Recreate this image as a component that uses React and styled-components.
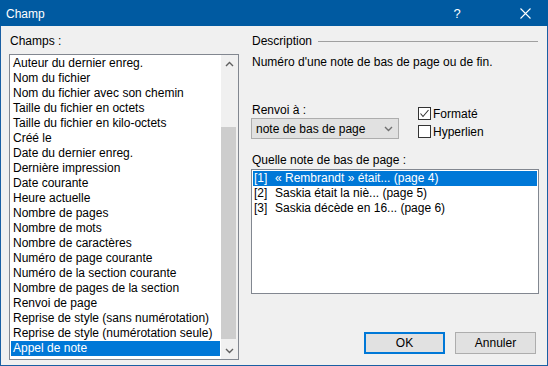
import React from "react";
import styled, { createGlobalStyle } from "styled-components";

const GlobalStyle = createGlobalStyle`
  html, body {
    margin: 0;
    padding: 0;
    background: #f0f0f0;
  }
  body {
    font-family: "Liberation Sans", Arial, sans-serif;
    font-size: 12px;
    color: #000;
  }
`;

const Window = styled.div`
  width: 548px;
  height: 366px;
  box-sizing: border-box;
  display: flex;
  flex-direction: column;
  background: #f0f0f0;
  border: 1px solid #1a5fa3;
  border-top: none;
`;

const TitleBar = styled.div`
  height: 26px;
  margin: 0 -1px;
  display: flex;
  align-items: center;
  background: #005aa1;
  color: #fff;
`;

const Title = styled.div`
  flex: 1;
  padding: 2px 0 0 6px;
  font-size: 12px;
`;

const TitleButton = styled.div`
  width: 46px;
  height: 26px;
  display: flex;
  align-items: center;
  justify-content: center;
  margin-left: ${(p) => p.$gap || 0}px;
  font-size: 13px;
`;

const Body = styled.div`
  flex: 1;
  display: grid;
  grid-template-columns: 230px 288px;
  column-gap: 12px;
  padding: 8px 0 0 8px;
`;

const Column = styled.div`
  display: flex;
  flex-direction: column;
`;

const Label = styled.div`
  line-height: 15px;
  height: 15px;
  margin-top: ${(p) => p.$top || 0}px;
  padding-left: 1px;
`;

const ListBox = styled.div`
  box-sizing: border-box;
  border: 1px solid #828790;
  background: #fff;
  height: ${(p) => p.$h}px;
  margin-top: ${(p) => p.$top || 0}px;
  display: flex;
`;

const Items = styled.div`
  flex: 1;
  padding: 1px 1px 0 1px;
  display: flex;
  flex-direction: column;
`;

const Item = styled.div`
  height: 15px;
  line-height: 15px;
  padding-left: ${(p) => p.$pad}px;
  white-space: nowrap;
  display: flex;
  background: ${(p) => (p.$sel ? "#0078d7" : "transparent")};
  color: ${(p) => (p.$sel ? "#fff" : "#000")};
`;

const Num = styled.span`
  width: 21px;
  flex: none;
`;

const ScrollBar = styled.div`
  width: 17px;
  background: #f0f0f0;
  display: flex;
  flex-direction: column;
`;

const Arrow = styled.div`
  height: 17px;
  display: flex;
  align-items: center;
  justify-content: center;
`;

const Track = styled.div`
  flex: 1;
  padding-top: 55px;
`;

const Thumb = styled.div`
  height: 212px;
  margin: 0 2px 0 0;
  background: #cdcdcd;
`;

const GroupHeader = styled.div`
  display: flex;
  align-items: center;
  height: 15px;
  line-height: 15px;
`;

const Rule = styled.div`
  flex: 1;
  height: 1px;
  background: #a0a0a0;
  margin-left: 6px;
  margin-right: 1px;
`;

const Text = styled.div`
  line-height: 15px;
  margin-top: ${(p) => p.$top || 0}px;
  padding-left: 1px;
`;

const RefRow = styled.div`
  display: flex;
  align-items: flex-end;
  margin-top: 33px;
`;

const SubColumn = styled.div`
  display: flex;
  flex-direction: column;
`;

const Select = styled.div`
  box-sizing: border-box;
  width: 148px;
  height: 21px;
  background: #e1e1e1;
  border: 1px solid #adadad;
  display: flex;
  align-items: center;
  justify-content: space-between;
  padding: 0 5px 0 4px;
`;

const Checks = styled.div`
  display: flex;
  flex-direction: column;
  gap: 3px;
  margin-left: 19px;
`;

const CheckRow = styled.label`
  display: flex;
  align-items: center;
  height: 15px;
  gap: 2px;
`;

const Box = styled.span`
  box-sizing: border-box;
  width: 13px;
  height: 13px;
  border: 1px solid #333;
  background: #fff;
  display: flex;
  align-items: center;
  justify-content: center;
`;

const ButtonRow = styled.div`
  display: flex;
  justify-content: flex-end;
  gap: 10px;
  margin-top: 38px;
  padding-right: 3px;
`;

const Button = styled.div`
  box-sizing: border-box;
  width: 81px;
  height: 22px;
  background: #e1e1e1;
  border: ${(p) => (p.$default ? "2px solid #0078d7" : "1px solid #adadad")};
  display: flex;
  align-items: center;
  justify-content: center;
`;

const Chevron = ({ up, color = "#606060" }) => (
  <svg width="9" height="6" viewBox="0 0 9 6">
    <polyline
      points={up ? "1,5 4.5,1.5 8,5" : "1,1 4.5,4.5 8,1"}
      fill="none"
      stroke={color}
      strokeWidth="1.4"
    />
  </svg>
);

const fields = [
  "Auteur du dernier enreg.",
  "Nom du fichier",
  "Nom du fichier avec son chemin",
  "Taille du fichier en octets",
  "Taille du fichier en kilo-octets",
  "Créé le",
  "Date du dernier enreg.",
  "Dernière impression",
  "Date courante",
  "Heure actuelle",
  "Nombre de pages",
  "Nombre de mots",
  "Nombre de caractères",
  "Numéro de page courante",
  "Numéro de la section courante",
  "Nombre de pages de la section",
  "Renvoi de page",
  "Reprise de style (sans numérotation)",
  "Reprise de style (numérotation seule)",
  "Appel de note",
];

const notes = [
  ["[1]", "« Rembrandt » était... (page 4)"],
  ["[2]", "Saskia était la niè... (page 5)"],
  ["[3]", "Saskia décède en 16... (page 6)"],
];

export default function App() {
  return (
    <>
      <GlobalStyle />
      <Window>
        <TitleBar>
          <Title>Champ</Title>
          <TitleButton>?</TitleButton>
          <TitleButton $gap={22}>
            <svg width="11" height="11" viewBox="0 0 11 11">
              <path d="M0.5 0.5 L10.5 10.5 M10.5 0.5 L0.5 10.5" stroke="#fff" strokeWidth="1.1" />
            </svg>
          </TitleButton>
        </TitleBar>
        <Body>
          <Column>
            <Label>Champs :</Label>
            <ListBox $h={306} $top={5}>
              <Items>
                {fields.map((f, i) => (
                  <Item key={f} $pad={2} $sel={i === fields.length - 1}>
                    {f}
                  </Item>
                ))}
              </Items>
              <ScrollBar>
                <Arrow>
                  <Chevron up />
                </Arrow>
                <Track>
                  <Thumb />
                </Track>
                <Arrow>
                  <Chevron />
                </Arrow>
              </ScrollBar>
            </ListBox>
          </Column>
          <Column>
            <GroupHeader>
              <span style={{ paddingLeft: 1 }}>Description</span>
              <Rule />
            </GroupHeader>
            <Text $top={6}>Numéro d'une note de bas de page ou de fin.</Text>
            <RefRow>
              <SubColumn>
                <Label>Renvoi à :</Label>
                <Select>
                  <span>note de bas de page</span>
                  <Chevron color="#707070" />
                </Select>
              </SubColumn>
              <Checks>
                <CheckRow>
                  <Box>
                    <svg width="11" height="11" viewBox="0 0 11 11">
                      <polyline points="1.5,5.5 4,8.5 9.5,2" fill="none" stroke="#333" strokeWidth="1.1" />
                    </svg>
                  </Box>
                  Formaté
                </CheckRow>
                <CheckRow>
                  <Box />
                  Hyperlien
                </CheckRow>
              </Checks>
            </RefRow>
            <Label $top={14}>Quelle note de bas de page :</Label>
            <ListBox $h={125} $top={1}>
              <Items>
                {notes.map(([n, t], i) => (
                  <Item key={n} $pad={1} $sel={i === 0}>
                    <Num>{n}</Num>
                    {t}
                  </Item>
                ))}
              </Items>
            </ListBox>
            <ButtonRow>
              <Button $default>OK</Button>
              <Button>Annuler</Button>
            </ButtonRow>
          </Column>
        </Body>
      </Window>
    </>
  );
}
